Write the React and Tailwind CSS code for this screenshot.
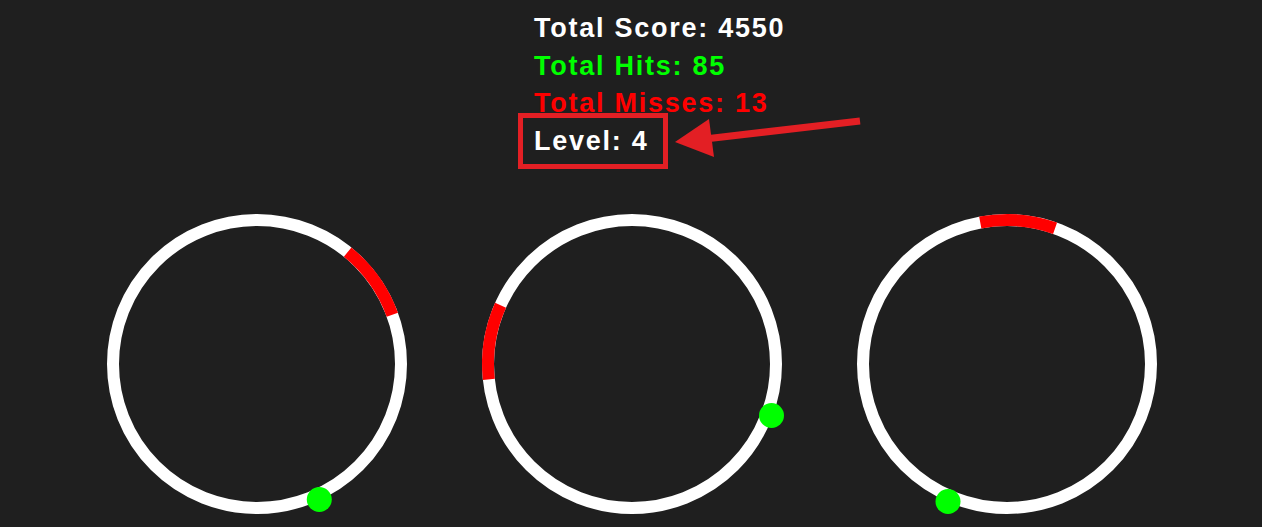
import React from 'react';

const R = 144;

const pt = (deg) => {
    const a = (deg * Math.PI) / 180;
    return [150 + R * Math.cos(a), 150 + R * Math.sin(a)];
};

const arc = (from, to) => {
    const [x1, y1] = pt(from);
    const [x2, y2] = pt(to);
    return `M ${x1} ${y1} A ${R} ${R} 0 0 1 ${x2} ${y2}`;
};

const rings = [
    { miss: [-51, -20], hit: [212.3, 285.5] },
    { miss: [173.9, 204.1], hit: [289.5, 201.5] },
    { miss: [-100.7, -70.5], hit: [91, 287.5] },
];

const Ring = ({ miss, hit }) => (
    <svg width="300" height="300" viewBox="0 0 300 300" className="overflow-visible shrink-0">
        <circle cx="150" cy="150" r={R} fill="none" stroke="#ffffff" strokeWidth="12" />
        <path d={arc(miss[0], miss[1])} fill="none" stroke="#ff0000" strokeWidth="12" />
        <circle cx={hit[0]} cy={hit[1]} r="12.5" fill="#00ff00" />
    </svg>
);

const App = () => {
    return (
        <div className="relative w-[1262px] h-[527px] bg-[#1f1f1f] overflow-hidden" style={{ fontFamily: '"Liberation Sans", Arial, sans-serif' }}>
            <div className="pl-[534px] pt-[10px] text-[27px] leading-[37.5px] font-bold tracking-[1.75px]">
                <div className="text-white">Total Score: 4550</div>
                <div className="text-[#00ff00]">Total Hits: 85</div>
                <div className="text-[#ff0000]">Total Misses: 13</div>
                <div className="text-white">Level: 4</div>
            </div>

            <div className="flex gap-[75px] pl-[107px] mt-[54px]">
                {rings.map((r, i) => (
                    <Ring key={i} {...r} />
                ))}
            </div>

            {/* annotation */}
            <div className="absolute left-[518px] top-[113px] w-[150px] h-[56px] border-[5px] border-[#e31f24]" />
            <svg className="absolute left-0 top-0" width="1262" height="527">
                <line x1="860" y1="121" x2="705" y2="139" stroke="#e31f24" strokeWidth="7" />
                <polygon points="675,142 709,119 714,157" fill="#e31f24" />
            </svg>
        </div>
    );
};

export default App;
